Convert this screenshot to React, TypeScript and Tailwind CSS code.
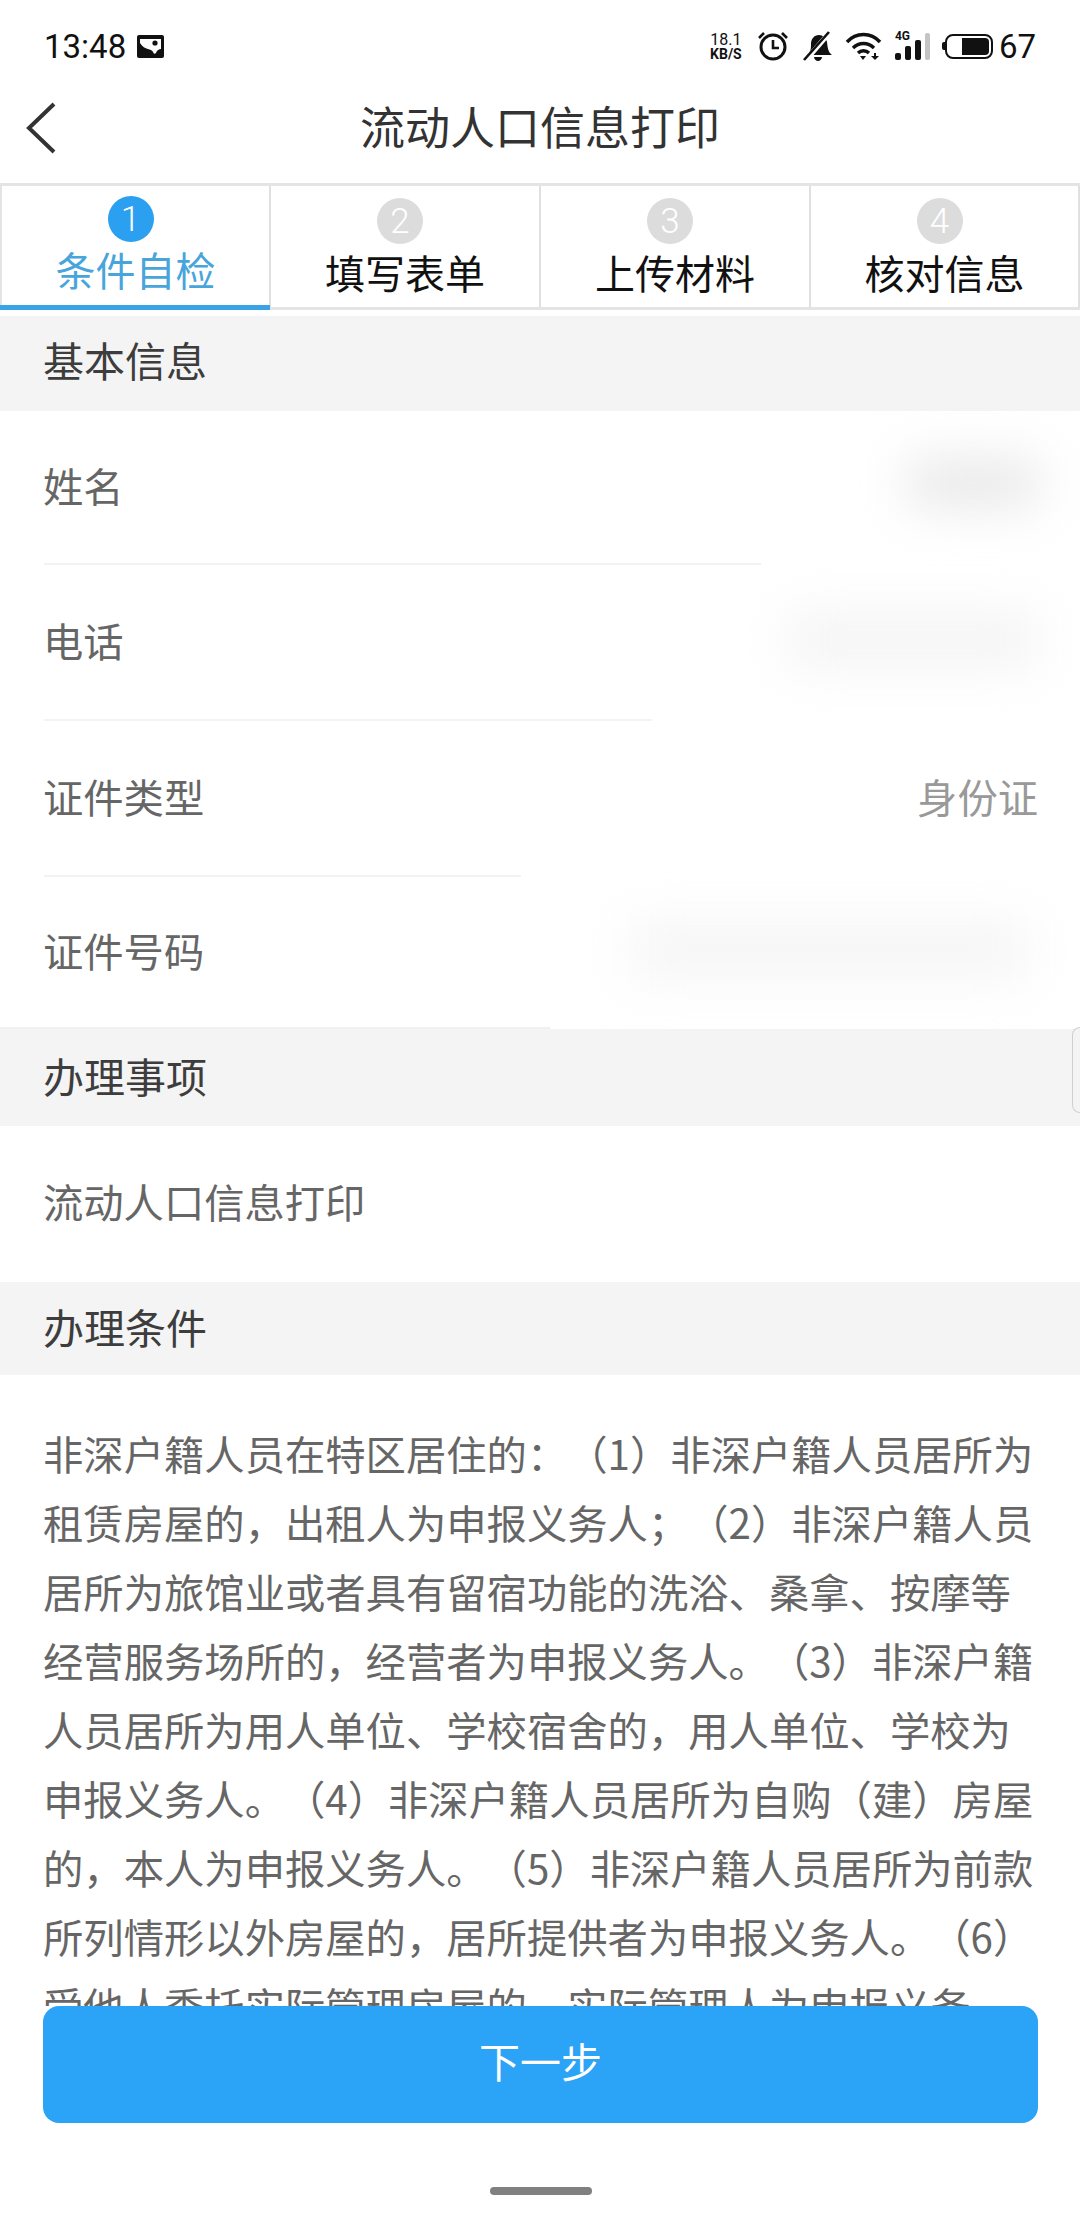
import React from 'react';

const cjk = 'font-["Noto_Sans_CJK_SC",sans-serif] [text-spacing-trim:space-all]';

function GalleryIcon() {
  return (
    <svg width="27" height="23" viewBox="0 0 27 23" className="ml-[11px]">
      <rect x="0" y="0" width="27" height="23" rx="2" fill="#111" />
      <path d="M3 4h21v10c-2 0-4 1-5 4-1 1-2 1-2.500 0-.5-2-2-3-4-3.500C8 13.500 5 11.500 3 8z" fill="#fff" />
      <circle cx="18" cy="8" r="2.600" fill="#111" />
    </svg>
  );
}

function StatusIcons() {
  return (
    <div className="flex items-center">
      <div className="flex flex-col items-center w-[36px] font-['Roboto',sans-serif] text-[#111] leading-none">
        <span className="text-[16px] h-[15px]">18.1</span>
        <span className="text-[14px] font-bold h-[13px]">KB/S</span>
      </div>
      <svg width="32" height="32" viewBox="0 0 32 32" className="ml-[13px]" fill="none" stroke="#111">
        <circle cx="16" cy="17" r="12" strokeWidth="3" />
        <path d="M16 10v8h6" strokeWidth="2.600" />
        <path d="M2 8l5-5M30 8l-5-5" strokeWidth="2.600" />
      </svg>
      <svg width="30" height="30" viewBox="0 0 30 30" className="ml-[14px]">
        <path d="M4 24c4-3 4-7 4-11 0-5 3-9 8-9 4 0 7 3 8 7 .5 5 1 10 5 13z" fill="#111" />
        <path d="M11 26h8c0 2-2 4-4 4s-4-2-4-4z" fill="#111" />
        <path d="M3 29L27 1" stroke="#fff" strokeWidth="5" />
        <path d="M1 29L26 1" stroke="#111" strokeWidth="2.600" />
      </svg>
      <svg width="37" height="30" viewBox="0 0 37 30" className="ml-[12px]" fill="none" stroke="#111" strokeWidth="3.400">
        <path d="M2 11c9-10 24-10 33 0" />
        <path d="M8 17c6-6 15-6 21 0" />
        <path d="M13 22c3-3 8-3 11 0" />
        <path d="M15 25h6l-3 4z" fill="#111" strokeWidth="0" />
        <path d="M29 22v3h-3l4 4 4-4h-3v-3z" fill="#111" strokeWidth="0" />
      </svg>
      <div className="relative ml-[13px] w-[36px] h-[27px]">
        <span className="absolute left-0 top-[-3px] font-['Roboto',sans-serif] font-bold text-[12px] leading-[12px] text-[#111]">4G</span>
        <div className="absolute inset-0 flex items-end gap-[4px]">
          <span className="w-[6px] h-[7px] rounded-[2px] bg-[#111]" />
          <span className="w-[6px] h-[14px] rounded-[2px] bg-[#111]" />
          <span className="w-[6px] h-[20px] rounded-[2px] bg-[#111]" />
          <span className="w-[5px] h-[27px] rounded-[2px] bg-[#c4c4c4]" />
        </div>
      </div>
      <div className="flex items-center ml-[11px]">
        <span className="w-[3px] h-[8px] rounded-l-[2px] bg-[#111]" />
        <div className="w-[48px] h-[25px] rounded-[8px] border-[2.500px] border-[#111] flex justify-end p-[2px]">
          <span className="w-[27px] h-full rounded-r-[4px] bg-[#111]" />
        </div>
      </div>
      <span className="ml-[6px] font-['Roboto',sans-serif] text-[33px] leading-none text-[#111]">67</span>
    </div>
  );
}

function Tab({ n, label, active }: { n: number; label: string; active?: boolean }) {
  return (
    <div
      className={
        active
          ? 'relative flex flex-col items-center pt-[10px] border-r-[2px] border-[#e0e0e0]'
          : 'relative flex flex-col items-center pt-[12px] border-r-[2px] border-[#e0e0e0]'
      }
    >
      <div
        className={
          active
            ? "mr-[10px] w-[46px] h-[46px] rounded-full bg-[#2ba0f0] text-white flex items-center justify-center font-['Roboto',sans-serif] text-[35px] font-light leading-none"
            : "mr-[10px] w-[46px] h-[46px] rounded-full bg-[#dcdcdc] text-white flex items-center justify-center font-['Roboto',sans-serif] text-[35px] font-light leading-none"
        }
      >
        {n}
      </div>
      <div className={active ? 'text-[40px] leading-[50px] mt-[2px] text-[#47a5dc]' : 'text-[40px] leading-[50px] mt-[3px] text-[#111]'}>
        {label}
      </div>
      {active && <div className="absolute left-[-2px] right-[-1px] bottom-[-3px] h-[5px] bg-[#3aa2e6]" />}
    </div>
  );
}

function Section({ title, h }: { title: string; h: string }) {
  return (
    <div className={`${h} bg-[#f4f4f4] flex items-center pl-[43px] text-[41px] text-[#3d3d3d]`}>
      {title}
    </div>
  );
}

function Row({
  label,
  h,
  line,
  children,
}: {
  label: string;
  h: string;
  line?: string;
  children?: React.ReactNode;
}) {
  return (
    <div className={`${h} relative flex items-center justify-between pl-[43px] pr-[42px] text-[40.300px] text-[#666666]`}>
      <span className="mt-[-5px]">{label}</span>
      {children}
      {line && <div className={`absolute left-[44px] bottom-0 h-[2px] bg-[#f3f3f3] ${line}`} />}
    </div>
  );
}

const condition =
  '非深户籍人员在特区居住的：（1）非深户籍人员居所为租赁房屋的，出租人为申报义务人；（2）非深户籍人员居所为旅馆业或者具有留宿功能的洗浴、桑拿、按摩等经营服务场所的，经营者为申报义务人。（3）非深户籍人员居所为用人单位、学校宿舍的，用人单位、学校为申报义务人。（4）非深户籍人员居所为自购（建）房屋的，本人为申报义务人。（5）非深户籍人员居所为前款所列情形以外房屋的，居所提供者为申报义务人。（6）受他人委托实际管理房屋的，实际管理人为申报义务';

export default function App() {
  return (
    <div className={`relative w-[1080px] h-[2232px] overflow-hidden bg-white ${cjk}`}>
      <div className="h-[92px] flex items-center justify-between pl-[44px] pr-[44px]">
        <div className="flex items-center">
          <span className="font-['Roboto',sans-serif] text-[33px] leading-none text-[#111]">13:48</span>
          <GalleryIcon />
        </div>
        <StatusIcons />
      </div>

      <div className="relative h-[91px] flex items-center justify-center text-[45px] text-[#333333]">
        <svg width="34" height="54" viewBox="0 0 34 54" className="absolute left-[24px] top-[9px]" fill="none" stroke="#333" strokeWidth="4">
          <path d="M30 3L5 27l25 24" />
        </svg>
        <span className="mt-[-23px]">流动人口信息打印</span>
      </div>

      <div className="grid grid-cols-[269px_270px_270px_269px] h-[127px] border-y-[3px] border-l-[2px] border-[#e4e4e4] text-center">
        <Tab n={1} label="条件自检" active />
        <Tab n={2} label="填写表单" />
        <Tab n={3} label="上传材料" />
        <Tab n={4} label="核对信息" />
      </div>

      <div className="h-[6px]" />
      <Section title="基本信息" h="h-[95px] pb-[8px]" />
      <Row label="姓名" h="h-[154px]" line="w-[717px]">
        <div className="w-[130px] h-[50px] mt-[-10px] bg-[#e9e9e9] blur-xl" />
      </Row>
      <Row label="电话" h="h-[156px]" line="w-[608px]">
        <div className="w-[250px] h-[60px] mt-[-6px] bg-[#f5f5f5] blur-xl" />
      </Row>
      <Row label="证件类型" h="h-[156px]" line="w-[477px]">
        <span className="mt-[-5px] text-[#999999]">身份证</span>
      </Row>
      <Row label="证件号码" h="h-[152px]">
        <div className="w-[400px] h-[60px] mr-[8px] mt-[-6px] bg-[#f6f6f6] blur-xl" />
        <div className="absolute left-0 bottom-0 w-[550px] h-[2px] bg-[#f0f0f0]" />
      </Row>
      <Section title="办理事项" h="h-[97px] pb-[3px]" />
      <Row label="流动人口信息打印" h="h-[156px]" />
      <Section title="办理条件" h="h-[93px] pb-[3px]" />
      <p className="pt-[43px] pl-[43px] pr-[40px] text-[40.350px] leading-[69px] text-[#666666]">{condition}</p>

      <div className="absolute right-0 top-[1027px] w-[8px] h-[86px] border border-r-0 border-[#d0d0d0] rounded-l-[8px] bg-[#f4f4f4]" />

      <div className="absolute inset-x-0 bottom-0 h-[226px] bg-white pl-[43px] pr-[42px]">
        <div className="h-[117px] rounded-[16px] bg-[#2ba3f7] flex items-center justify-center pb-[8px] text-[41px] text-white">
          下一步
        </div>
        <div className="mx-auto mt-[64px] w-[102px] h-[8px] rounded-full bg-[#808080]" />
      </div>
    </div>
  );
}
